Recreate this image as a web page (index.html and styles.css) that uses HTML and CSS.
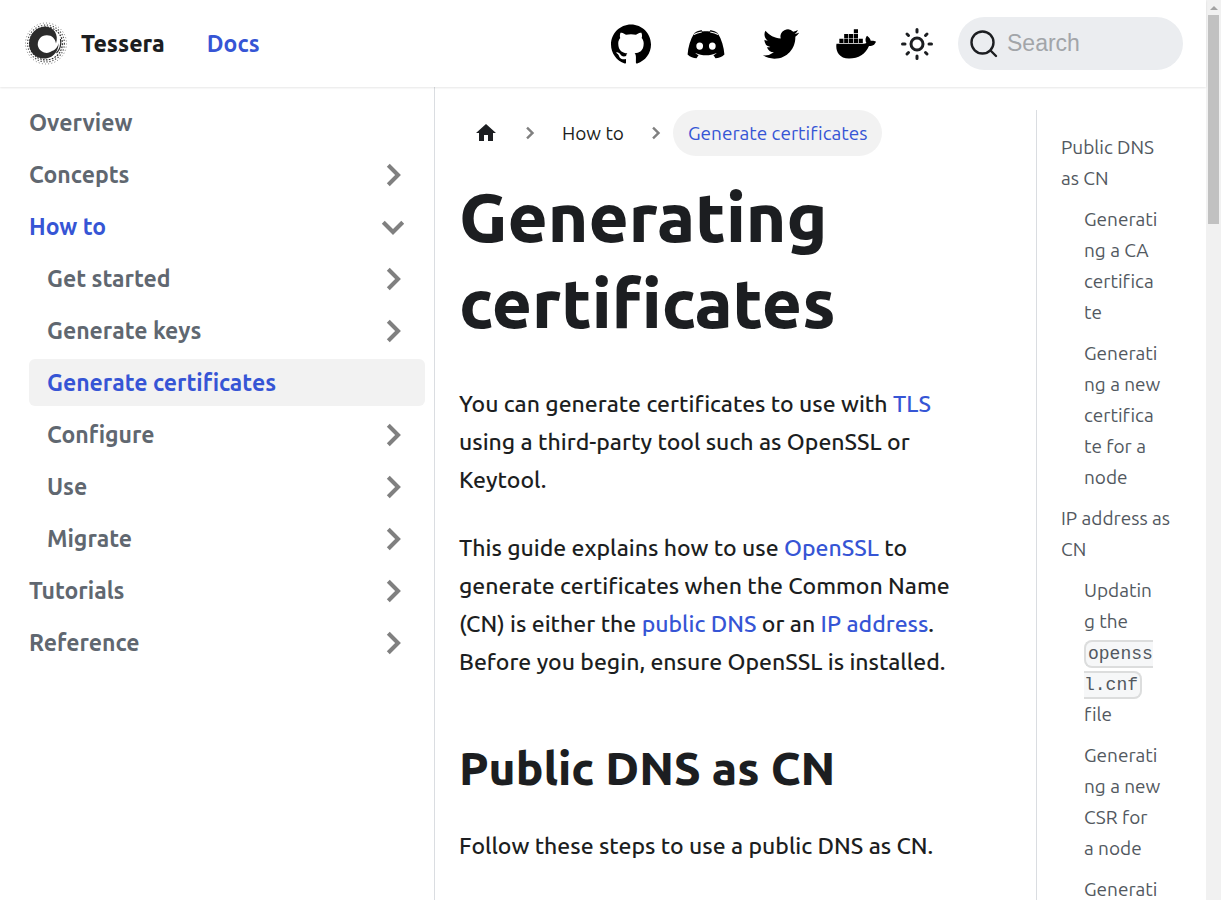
FILE: index.html
```html
<!DOCTYPE html>
<html lang="en">
<head>
<meta charset="utf-8">
<title>Generating certificates | Tessera</title>
<link rel="stylesheet" href="styles.css">
</head>
<body>
<svg class="sprite" aria-hidden="true">
  <symbol id="chevron" viewBox="0 0 24 24"><path d="M8.200 16.600l4.600-4.600-4.600-4.600L9.900 5.700l6.300 6.300-6.300 6.300z"/></symbol>
  <symbol id="caret" viewBox="0 0 24 24"><path d="M6.700 4.900L9.200 2.400l9.600 9.600-9.600 9.600-2.500-2.500L13.800 12z"/></symbol>
</svg>
<div class="app">
  <div class="page">
    <header class="navbar">
      <a class="brand" href="#">
        <svg class="logo" viewBox="0 0 44 44" fill="none" stroke="#2b2b2b">
          <circle cx="23" cy="21.500" r="20.500" stroke-width="1" stroke-dasharray="1 2.200" opacity=".6"/>
          <circle cx="23" cy="21.500" r="18.400" stroke-width="1.200" stroke-dasharray="1.300 1.700" opacity=".85"/>
          <circle cx="23" cy="21.500" r="16.400" stroke-width="1.200" stroke-dasharray="1.700 1.300"/>
          <path stroke-width="1.200" d="M37.500 17c1 6-1 11-4 14"/>
          <path fill="#2b2b2b" stroke="none" d="M33 21.500C32 16.500 29 13.300 24 13.300A8.800 8.800 0 1 0 29 29C33 28 35 24 35.500 21C36 28 31 35.500 23 36.500C13 37.500 6 30 6 21.500C6.500 12 13 5 22 4.500C31 4.500 36 13 33 21.500z"/>
        </svg>
        <span>Tessera</span>
      </a>
      <a class="docs" href="#">Docs</a>
      <nav class="social" aria-label="Community">
        <a href="#" aria-label="GitHub"><svg viewBox="0 0 24 24"><path d="M12 .297c-6.630 0-12 5.373-12 12 0 5.303 3.438 9.800 8.205 11.385.6.113.82-.258.82-.577 0-.285-.01-1.040-.015-2.040-3.338.724-4.042-1.610-4.042-1.610C4.422 18.070 3.633 17.700 3.633 17.700c-1.087-.744.084-.729.084-.729 1.205.084 1.838 1.236 1.838 1.236 1.070 1.835 2.809 1.305 3.495.998.108-.776.417-1.305.76-1.605-2.665-.3-5.466-1.332-5.466-5.930 0-1.310.465-2.380 1.235-3.220-.135-.303-.54-1.523.105-3.176 0 0 1.005-.322 3.300 1.230.96-.267 1.980-.399 3-.405 1.020.006 2.040.138 3 .405 2.280-1.552 3.285-1.230 3.285-1.230.645 1.653.24 2.873.12 3.176.765.84 1.230 1.910 1.230 3.220 0 4.610-2.805 5.625-5.475 5.920.42.36.81 1.096.81 2.220 0 1.606-.015 2.896-.015 3.286 0 .315.21.69.825.57C20.565 22.092 24 17.592 24 12.297c0-6.627-5.373-12-12-12"/></svg></a>
        <a href="#" aria-label="Discord"><svg viewBox="1 1 38 38"><path d="M9 9.500c3-2 6.500-2.500 7-2.500l.6 1.200c2.300-.3 4.500-.3 6.800 0L24 7c.5 0 4 .5 7 2.500 4 6 6 13.500 6.500 20.500-2.500 2.500-5.500 3.500-8.500 3.500l-2-3c1.500-.5 3-1.500 3-2-6.500 3-13.500 3-20 0 0 .5 1.500 1.500 3 2l-2 3c-3 0-6-1-8.500-3.500C3 23 5 15.500 9 9.500zM14 18.500a3.200 3.500 0 1 0 0 7 3.200 3.500 0 0 0 0-7zm12 0a3.200 3.500 0 1 0 0 7 3.200 3.500 0 0 0 0-7z"/><path d="M8.500 11c3-1.700 4.500-2 7.500-2.500M31.500 11c-3-1.700-4.500-2-7.500-2.500" stroke="#fff" fill="none"/></svg></a>
        <a href="#" aria-label="Twitter"><svg class="bird" viewBox="0 0 24 24"><path d="M23.953 4.570a10 10 0 0 1-2.825.775 4.958 4.958 0 0 0 2.163-2.723c-.951.555-2.005.959-3.127 1.184a4.920 4.920 0 0 0-8.384 4.482C7.690 8.095 4.067 6.130 1.640 3.162a4.822 4.822 0 0 0-.666 2.475c0 1.710.87 3.213 2.188 4.096a4.904 4.904 0 0 1-2.228-.616v.06a4.923 4.923 0 0 0 3.946 4.827 4.996 4.996 0 0 1-2.212.085 4.936 4.936 0 0 0 4.604 3.417 9.867 9.867 0 0 1-6.102 2.105c-.39 0-.779-.023-1.170-.067a13.995 13.995 0 0 0 7.557 2.209c9.053 0 13.998-7.496 13.998-13.985 0-.21 0-.42-.015-.63A9.935 9.935 0 0 0 24 4.590z"/></svg></a>
        <a href="#" aria-label="Docker"><svg viewBox="0 0 24 24"><path d="M2 8.900h2.500v2.500H2zM4.900 8.900h2.500v2.500H4.900zM7.800 8.900h2.500v2.500H7.800zM10.700 8.900h2.500v2.500h-2.500zM13.600 8.900h2.500v2.500h-2.500zM4.900 6h2.500v2.500H4.900zM7.800 6h2.500v2.500H7.800zM10.700 6h2.500v2.500h-2.500zM10.700 3.100h2.500v2.500h-2.500zM23.800 10.500c-.6-.45-2-.6-3-.4-.15-1.050-.7-1.900-1.650-2.600l-.55-.4-.4.600c-.7 1.100-.65 2.700.05 3.700-.4.250-1.100.4-1.700.4H.3C-.1 14 .35 16.400 1.700 18.200 3 19.900 5 20.700 7.800 20.700c5.800 0 10-2.700 12-7.500 1.500 0 2.900-.1 3.800-1.800l.4-.7z"/></svg></a>
      </nav>
      <button class="theme" type="button" aria-label="Switch to dark mode"><svg viewBox="0 0 32 32" fill="none" stroke="#1c1e21" stroke-width="3" stroke-linecap="round"><circle cx="16" cy="16" r="6"/><path d="M16 1.500v2.500M16 28v2.500M1.500 16H4M28 16h2.500M6 6l1.500 1.500M24.500 24.500L26 26M6 26l1.500-1.500M24.500 7.500L26 6"/></svg></button>
      <label class="search">
        <svg viewBox="0 0 28 28" fill="none" stroke="#1c1e21" stroke-width="2.400" stroke-linecap="round"><circle cx="12.500" cy="12.500" r="11"/><path d="M20.500 20.500l5.500 5.500"/></svg>
        <input type="search" placeholder="Search" aria-label="Search">
      </label>
    </header>
    <div class="columns">
      <nav class="sidebar" aria-label="Docs">
        <a class="item" href="#">Overview</a>
        <a class="item" href="#">Concepts<svg><use href="#caret"/></svg></a>
        <a class="item current" href="#">How to<svg class="open"><use href="#caret"/></svg></a>
        <div class="children">
          <a class="item" href="#">Get started<svg><use href="#caret"/></svg></a>
          <a class="item" href="#">Generate keys<svg><use href="#caret"/></svg></a>
          <a class="item current selected" href="#">Generate certificates</a>
          <a class="item" href="#">Configure<svg><use href="#caret"/></svg></a>
          <a class="item" href="#">Use<svg><use href="#caret"/></svg></a>
          <a class="item" href="#">Migrate<svg><use href="#caret"/></svg></a>
        </div>
        <a class="item" href="#">Tutorials<svg><use href="#caret"/></svg></a>
        <a class="item" href="#">Reference<svg><use href="#caret"/></svg></a>
      </nav>
      <main class="article">
        <nav class="crumbs" aria-label="Breadcrumbs">
          <a href="#" aria-label="Home"><svg class="home" viewBox="0 0 24 24"><path d="M10 20v-6h4v6h5v-8h3L12 3 2 12h3v8z"/></svg></a>
          <svg class="sep"><use href="#chevron"/></svg>
          <a href="#">How to</a>
          <svg class="sep"><use href="#chevron"/></svg>
          <span class="here">Generate certificates</span>
        </nav>
        <h1>Generating certificates</h1>
        <p>You can generate certificates to use with <a href="#">TLS</a><br>using a third-party tool such as OpenSSL or<br>Keytool.</p>
        <p>This guide explains how to use <a href="#">OpenSSL</a> to<br>generate certificates when the Common Name<br>(CN) is either the <a href="#">public DNS</a> or an <a href="#">IP address</a>.<br>Before you begin, ensure OpenSSL is installed.</p>
        <h2>Public DNS as CN</h2>
        <p>Follow these steps to use a public DNS as CN.</p>
      </main>
      <nav class="toc" aria-label="On this page">
        <a href="#">Public DNS<br>as CN</a>
        <a class="sub" href="#">Generati<br>ng a CA<br>certifica<br>te</a>
        <a class="sub" href="#">Generati<br>ng a new<br>certifica<br>te for a<br>node</a>
        <a href="#">IP address as<br>CN</a>
        <a class="sub" href="#">Updatin<br>g the<br><code>openss<br>l.cnf</code><br>file</a>
        <a class="sub" href="#">Generati<br>ng a new<br>CSR for<br>a node</a>
        <a class="sub" href="#">Generati</a>
      </nav>
    </div>
  </div>
  <div class="scrollbar" aria-hidden="true"><div class="arrow"></div><div class="thumb"></div></div>
</div>
</body>
</html>
```
FILE: styles.css
```css
* { box-sizing: border-box; }
body {
  margin: 0;
  background: #fff;
  color: #1c1e21;
  font-family: Ubuntu, "Noto Sans", sans-serif;
  font-size: 23px;
  font-weight: 500;
  font-variant-ligatures: none;
  line-height: 38px;
}
a { color: #3655d5; text-decoration: none; }
.sprite { display: none; }
.app { display: flex; height: 100vh; overflow: hidden; }
.page { flex: 1; min-width: 0; display: flex; flex-direction: column; }
.navbar {
  display: flex;
  align-items: center;
  flex: none;
  height: 87px;
  padding: 0 23px;
  box-shadow: 0 1px 2px rgba(0, 0, 0, .1);
  z-index: 1;
}
.brand { display: flex; align-items: center; gap: 14px; color: #1c1e21; font-weight: 800; }
.logo { width: 44px; height: 44px; }
.docs { margin-left: 42px; font-weight: 600; }
.social { display: flex; gap: 35px; margin-left: auto; }
.social a { display: flex; }
.social svg { width: 40px; height: 40px; }
.social .bird { padding: 2px; }
.theme { display: flex; margin: 0 25px; padding: 0; border: 0; background: none; }
.theme svg { width: 32px; height: 32px; }
.search {
  display: flex;
  align-items: center;
  gap: 9px;
  width: 225px;
  height: 53px;
  padding: 0 12px;
  border-radius: 27px;
  background: #ebedf0;
}
.search svg { flex: none; width: 28px; height: 28px; }
.search input {
  min-width: 0;
  flex: 1;
  padding: 0;
  border: 0;
  outline: 0;
  background: none;
  font: 23px "Liberation Sans", sans-serif;
}
.search input::placeholder { color: #a2a5a9; }
.columns { flex: 1; display: flex; min-height: 0; }
.sidebar {
  flex: 0 0 435px;
  padding: 12px 9px 0 11px;
  border-right: 1px solid #dadde1;
}
.item {
  display: flex;
  align-items: center;
  justify-content: space-between;
  height: 47px;
  margin-bottom: 5px;
  padding: 0 18px;
  border-radius: 6px;
  color: #606770;
  font-weight: 600;
}
.item svg { width: 28px; height: 28px; fill: #808080; }
.item .open { transform: rotate(90deg); }
.children { padding-left: 18px; }
.current { color: #3655d5; }
.selected { background: #f2f2f2; }
.article { flex: 1; min-width: 0; padding: 23px 24px 0; white-space: nowrap; }
.crumbs {
  display: flex;
  align-items: center;
  height: 46px;
  margin-bottom: 18px;
  font-size: 19px;
  font-weight: 400;
}
.crumbs a, .here { display: flex; align-items: center; height: 46px; padding: 0 15px; border-radius: 23px; color: #1c1e21; }
.crumbs .here { background: #f2f2f2; color: #3655d5; }
.home { width: 24px; height: 24px; fill: #1c1e21; }
.sep { width: 24px; height: 24px; margin: 0 5px; fill: #808080; }
h1 { margin: 0 0 39px; font-size: 69px; font-weight: 800; line-height: 86px; white-space: normal; }
p { margin: 0 0 30px; }
h2 { margin: 58px 0 30px; font-size: 46px; font-weight: 800; line-height: 58px; }
.toc {
  flex: 0 0 170px;
  margin-top: 23px;
  padding: 22px 0 0 24px;
  border-left: 1px solid #dadde1;
  font-size: 19px;
  font-weight: 400;
  line-height: 31px;
  white-space: nowrap;
}
.toc a { display: block; margin-bottom: 10px; color: #525860; }
.toc .sub { padding-left: 23px; }
code {
  padding: 2px;
  border: 2px solid #dcdddd;
  border-radius: 8px;
  background: #f6f7f8;
  font: 18px "Liberation Mono", monospace;
}
.scrollbar {
  display: flex;
  flex-direction: column;
  align-items: center;
  flex: 0 0 15px;
  background: #f1f1f1;
}
.arrow { margin: 6px 0 5px; border: 4px solid transparent; border-top: 0; border-bottom-color: #a3a3a3; }
.thumb { width: 11px; height: 209px; background: #c1c1c1; }
```
